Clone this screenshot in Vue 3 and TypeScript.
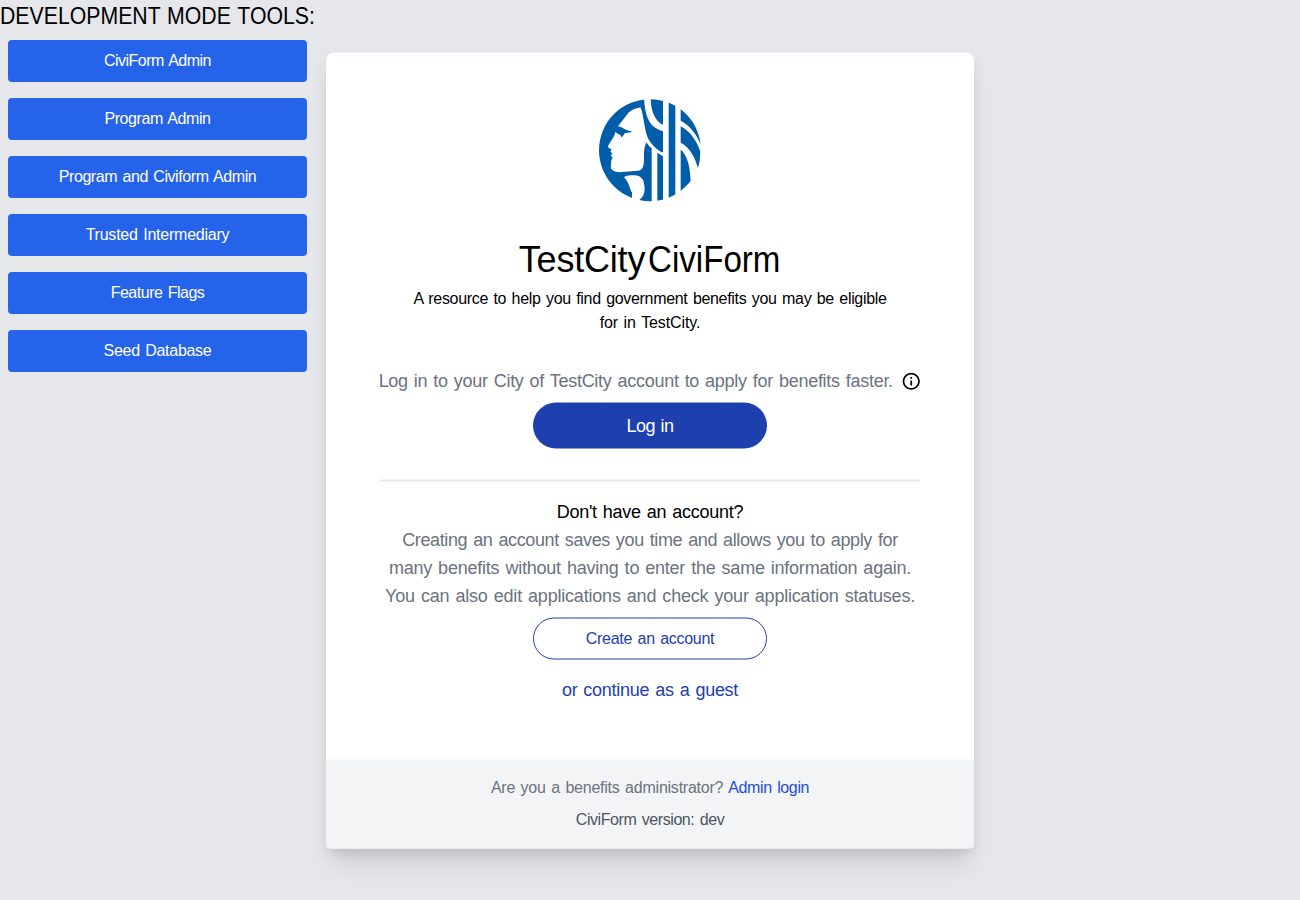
<script setup lang="ts">
const tools: { label: string; cls: string }[] = [
  { label: 'CiviForm Admin', cls: 't1' },
  { label: 'Program Admin', cls: 't2' },
  { label: 'Program and Civiform Admin', cls: 't3' },
  { label: 'Trusted Intermediary', cls: 't4' },
  { label: 'Feature Flags', cls: 't5' },
  { label: 'Seed Database', cls: 't6' },
]
</script>

<template>
  <div class="page">
    <aside class="tools">
      <h2><span>DEVELOPMENT MODE TOOLS:</span></h2>
      <button v-for="t in tools" :key="t.label"><span :class="t.cls">{{ t.label }}</span></button>
    </aside>
    <main class="card">
      <svg class="logo" viewBox="0 0 360 360" aria-label="TestCity logo">
        <defs><clipPath id="disc"><circle cx="180" cy="179" r="153" /></clipPath></defs>
        <g clip-path="url(#disc)" fill="#005daa">
          <path d="M162 20C164 58 169 82 185 103C194 113 207 119 219 122V186C203 180 185 164 174 143C163 121 162 77 152 51C139 51 126 58 116 66L84 107C98 110 108 120 125 122C127 125 116 126 108 127C101 129 101 138 94 141C93 134 90 131 83 130L76 124C75 138 62 152 54 167C53 172 60 174 65 176L61 183L67 189L62 195L68 202C61 210 65 220 62 231C65 241 76 244 88 245L145 241C160 238 162 224 162 203C161 184 163 169 169 155C174 163 179 168 185 173V340L147 329C162 318 166 302 163 285C162 264 151 255 134 254C121 254 109 254 102 260C118 274 119 298 126 305L126 330C70 318 20 260 20 180C20 90 75 20 162 20Z" />
          <path d="M182 20H219V103C194 91 182 61 182 20Z" />
          <path d="M202 187L219 197V340H202ZM236 30L256 38V324L236 340ZM272 50C312 60 338 120 332 161C318 130 300 106 272 91ZM272 107C300 122 321 150 331 184L327 246C318 202 300 173 272 156ZM272 177C290 195 300 220 302 274L272 302Z" />
        </g>
      </svg>
      <h1><span class="city">TestCity</span><span class="civi">CiviForm</span></h1>
      <p class="intro"><span class="i1">A resource to help you find government benefits you may be eligible</span><br><span class="i2">for in TestCity.</span></p>
      <div class="login-line">
        <span class="l1">Log in to your City of TestCity account to apply for benefits faster.</span>
        <svg class="info" viewBox="0 0 24 24"><path d="M11 7h2v2h-2zm0 4h2v6h-2zm1-9C6.48 2 2 6.48 2 12s4.48 10 10 10 10-4.480 10-10S17.520 2 12 2zm0 18c-4.410 0-8-3.590-8-8s3.590-8 8-8 8 3.590 8 8-3.590 8-8 8z" /></svg>
      </div>
      <button class="login"><span class="l2">Log in</span></button>
      <hr>
      <div class="account">
        <p class="question"><span class="q">Don't have an account?</span></p>
        <p><span class="a1">Creating an account saves you time and allows you to apply for</span></p>
        <p><span class="a2">many benefits without having to enter the same information again.</span></p>
        <p><span class="a3">You can also edit applications and check your application statuses.</span></p>
      </div>
      <button class="create"><span class="c">Create an account</span></button>
      <a class="guest"><span class="g">or continue as a guest</span></a>
      <footer>
        <p><span class="f1">Are you a benefits administrator?</span><a class="f2">Admin login</a></p>
        <p class="version"><span class="f3">CiviForm version: dev</span></p>
      </footer>
    </main>
  </div>
</template>

<style>
body { margin: 0; background: #e5e7eb; overflow: hidden; }
</style>
<style scoped>
* { box-sizing: border-box; }
.page { position: relative; width: 1300px; height: 900px; display: flex; justify-content: center; padding-top: 52.8px; background: #e5e7eb; color: #000; font: 16px/24px "Liberation Sans", Arial, sans-serif; word-spacing: 1.3px; }
p, h1, h2 { margin: 0; font-weight: 400; }
span, .f2 { white-space: nowrap; }
button { font: inherit; word-spacing: inherit; display: flex; align-items: center; justify-content: center; padding: 0; border: 0; }
.tools { position: absolute; left: 0; top: 0; width: 315px; }
.tools h2 { font-size: 24px; line-height: 32px; height: 32px; }
.tools h2 span { display: inline-block; transform: scaleX(.886); transform-origin: left; word-spacing: 1px; }
.tools button { width: 299px; height: 42px; margin: 8px 8px 16px; border-radius: 4px; background: #2563eb; color: #fff; }
.card { width: 648px; height: 796px; display: flex; flex-direction: column; align-items: center; background: #fff; border-radius: 8px; box-shadow: 0 20px 25px -5px rgba(0,0,0,.1), 0 10px 10px -5px rgba(0,0,0,.04), 0 4px 14px rgba(0,0,0,.06); transform: translateY(-.5px); }
.logo { width: 120px; height: 120px; margin-top: 38px; flex: none; }
h1 { display: flex; gap: 3px; margin-top: 29.2px; font-size: 36px; line-height: 40px; height: 40px; }
.intro { margin-top: 7px; text-align: center; height: 48px; }
.login-line { display: flex; align-items: center; height: 28px; margin-top: 32px; gap: 8px; color: #6b7280; font-size: 18px; }
.info { width: 20.5px; height: 20.5px; fill: #000; flex: none; transform: translateY(.5px); }
.login { width: 234px; height: 46px; margin-top: 8px; border-radius: 23px; background: #1e40af; color: #fff; font-size: 18px; flex: none; }
hr { width: 540px; height: 2px; margin: 31.5px 0 15.5px; border: 0; background: #e5e7eb; flex: none; }
.account { text-align: center; font-size: 18px; line-height: 28px; color: #6b7280; }
.question { color: #000; }
.create { width: 234px; height: 42px; margin-top: 8px; border: 1px solid #1e40af; border-radius: 21px; background: #fff; color: #1e40af; flex: none; }
.guest { margin-top: 16.4px; font-size: 18px; line-height: 28px; color: #1e40af; }
footer { width: 100%; height: 89.3px; margin-top: auto; padding-top: 16.5px; background: #f3f4f6; border-radius: 0 0 4px 4px; color: #6b7280; text-align: center; }
footer p { display: flex; justify-content: center; gap: 5px; }
.f2 { color: #1d4ed8; letter-spacing: -.37px; }
.version { margin-top: 8px; color: #4b5563; }
.city { letter-spacing: -.2px; }
.civi { transform: scaleX(.92); transform-origin: left; margin-right: -11px; }
.t1 { letter-spacing: -.52px; }
.t2, .t3, .f3 { letter-spacing: -.42px; }
.t4, .f1 { letter-spacing: -.23px; }
.t5 { letter-spacing: -.49px; }
.t6, .c { letter-spacing: -.29px; }
.i1 { letter-spacing: -.32px; }
.i2 { letter-spacing: -.11px; }
.l1 { letter-spacing: -.28px; }
.l2 { letter-spacing: -.58px; }
.q { letter-spacing: -.27px; }
.a1 { letter-spacing: -.37px; }
.a2 { letter-spacing: -.23px; }
.a3 { letter-spacing: -.2px; }
.g { letter-spacing: -.28px; }
</style>
